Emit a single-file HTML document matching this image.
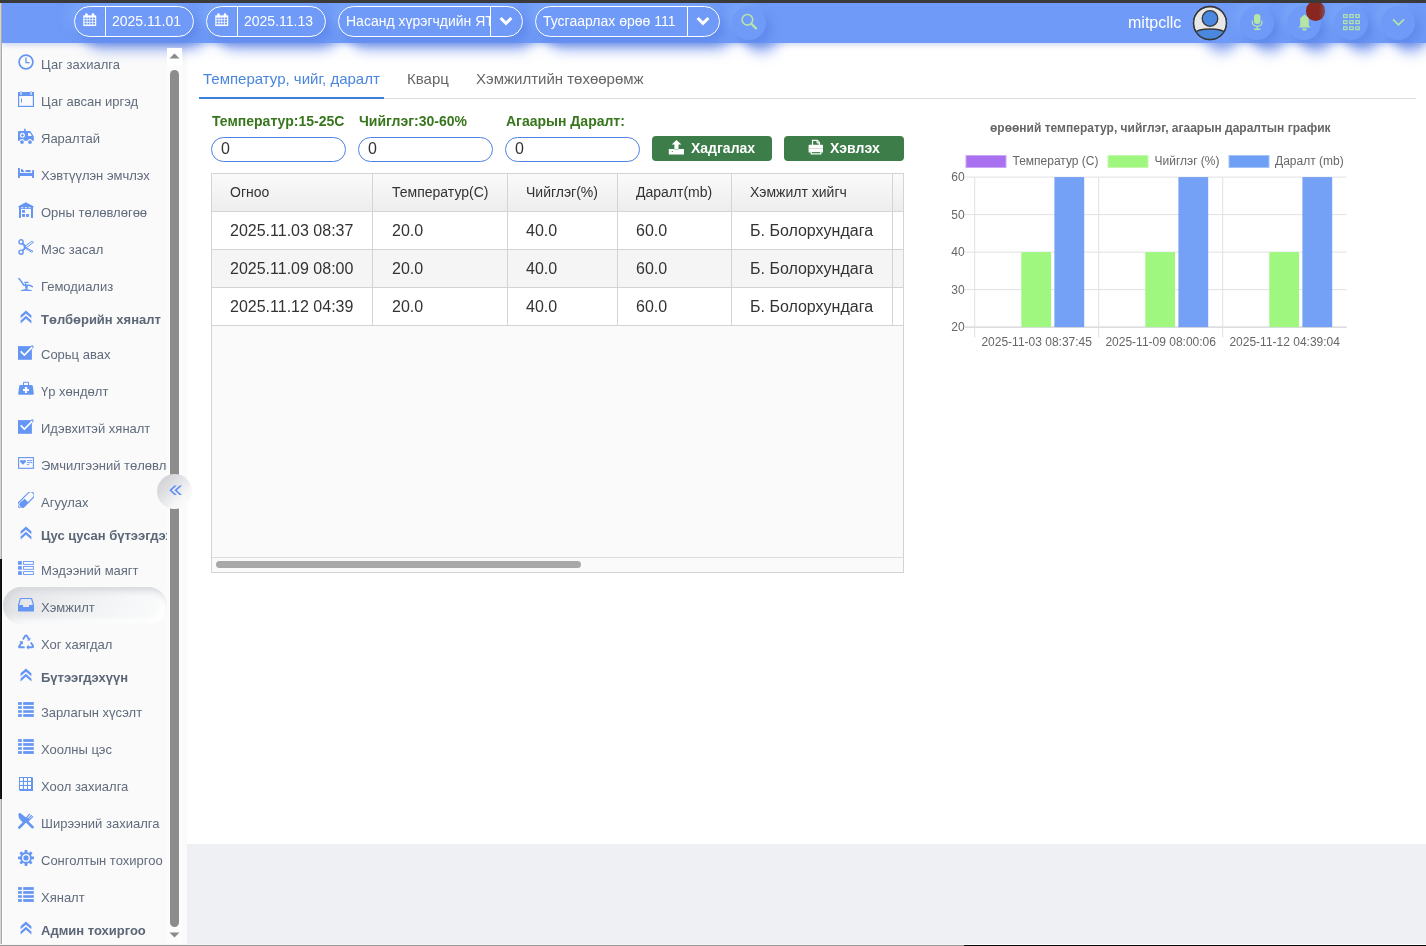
<!DOCTYPE html>
<html><head><meta charset="utf-8">
<style>
*{box-sizing:border-box;margin:0;padding:0}
html,body{width:1426px;height:946px;overflow:hidden;background:#fff;font-family:"Liberation Sans",sans-serif}
.abs{position:absolute}
#topbar{position:absolute;left:0;top:0;width:1426px;height:3px;background:#3a3a3a;z-index:50}
#leftedge{position:absolute;left:0;top:3px;width:2px;height:943px;background:linear-gradient(90deg,#d6d6d6 50%,#a9a9a9 50%);z-index:49}
#leftdark{position:absolute;left:0;top:559px;width:2px;height:240px;background:linear-gradient(90deg,#19191b 50%,#080808 50%);z-index:49}
#leftwhite{position:absolute;left:2px;top:43px;width:1px;height:903px;background:#fff;z-index:6}
#header{position:absolute;left:2px;top:3px;width:1424px;height:40px;background:#6f9af7;z-index:20;box-shadow:0 2px 5px rgba(110,145,225,.35)}
.pill{position:absolute;top:3px;height:31px;border:1.2px solid #fff;border-radius:16px;box-shadow:5px 6px 10px rgba(70,110,215,.35),-6px -6px 12px rgba(140,185,255,.35);background:#6f9af7}
.pill .dv{position:absolute;top:0;bottom:0;width:1.2px;background:#fff}
.pill .tx{position:absolute;top:0;line-height:28px;color:#fff;font-size:14px;white-space:nowrap;overflow:hidden}
.circ{position:absolute;width:34px;height:34px;border-radius:50%;background:#6f9af7;box-shadow:5px 6px 10px rgba(70,110,215,.35),-6px -6px 12px rgba(140,185,255,.35)}
#sidebar{position:absolute;left:2px;top:43px;width:185px;height:902px;background:#fafafa;z-index:5;overflow:hidden}
#sidebar .it{position:absolute;left:39px;width:126px;overflow:hidden;white-space:nowrap;font-size:13px;line-height:20px;color:#606b7c;height:20px}
#sidebar .it.b{font-weight:bold;color:#5b6676}
#sidebar .ic{position:absolute;left:16px}
#sidebar .act{position:absolute;left:1px;width:164px;height:37px;border-radius:18.5px;background:linear-gradient(100deg,#e0e1e4 0%,#eceef0 35%,#f6f7f8 75%,#fafbfb 100%);box-shadow:inset 3px 4px 6px #d6d8dc,inset -4px -4px 7px #ffffff}
#sb{position:absolute;left:167px;top:48px;width:15px;height:897px;background:#fcfcfc;z-index:25}
#sb-top{position:absolute;left:0;top:0;width:15px;height:18px;background:#fff}
#sb-thumb{position:absolute;left:3px;top:22px;width:9px;height:857px;border-radius:4.5px;background:#8c8c8c}
#toggle{position:absolute;left:157px;top:474px;width:35px;height:35px;border-radius:50%;background:linear-gradient(135deg,#d5d6da 20%,#e4e5e8 45%,#f7f7f8 70%,#fcfcfc 90%);z-index:30}
#main{position:absolute;left:187px;top:43px;width:1239px;height:801px;background:#fff}
#foot{position:absolute;left:187px;top:844px;width:1239px;height:101px;background:#eef0f4}
#botline{position:absolute;left:0;top:945px;width:1426px;height:1px;background:linear-gradient(90deg,#9a9a9a 964px,#080808 964px);z-index:60}
#botwhite{position:absolute;left:0;top:944px;width:1426px;height:1px;background:linear-gradient(90deg,#f4f5f7 964px,#ffffff 964px);z-index:59}

#content{position:absolute;left:0;top:0;width:1426px;height:946px;z-index:2}
.tab{font-size:15px;line-height:20px;color:#666;white-space:nowrap}
.act-tab{color:#4a86dc}
.lbl{font-size:14px;font-weight:bold;color:#38761d;line-height:18px;white-space:nowrap}
.inp{top:137px;width:135px;height:25px;border:1.2px solid #4f82e3;border-radius:12.5px;background:#fff;font-size:16px;color:#333;padding-left:9px;line-height:22px}
.btn{top:136px;width:120px;height:25px;border-radius:4px;background:#3d7d4a;color:#fff;font-size:14px;font-weight:bold;line-height:24px;white-space:nowrap}
#tbl{position:absolute;left:211px;top:173px;width:693px;height:400px;border:1px solid #d4d4d4;background:#fafafa;overflow:hidden}
#tbl .thead{left:0;top:0;width:691px;height:38px;background:linear-gradient(#fafafa,#ededed)}
#tbl .row{left:0;width:691px;height:38px}
#tbl .hl{position:absolute;left:0;width:691px;height:1px;background:#d4d4d4}
#tbl .vl{position:absolute;top:0;width:1px;height:152px;background:#d4d4d4}
#tbl .th{position:absolute;font-size:14px;color:#333;line-height:20px;white-space:nowrap}
#tbl .td{position:absolute;font-size:16px;color:#333;line-height:20px;white-space:nowrap}
</style></head><body><div id="root" style="position:absolute;left:0;top:0;width:1426px;height:946px;will-change:transform">
<div id="topbar"></div>
<div id="leftedge"></div><div id="leftdark"></div><div id="leftwhite"></div>
<div id="hshadows" style="position:absolute;left:0;top:0;z-index:19"><div class="abs" style="left:74px;top:6px;width:120px;height:31px;border-radius:16px;box-shadow:12px 12px 14px rgba(60,105,230,.6)"></div><div class="abs" style="left:206px;top:6px;width:120px;height:31px;border-radius:16px;box-shadow:12px 12px 14px rgba(60,105,230,.6)"></div><div class="abs" style="left:338px;top:6px;width:185px;height:31px;border-radius:16px;box-shadow:12px 12px 14px rgba(60,105,230,.6)"></div><div class="abs" style="left:535px;top:6px;width:185px;height:31px;border-radius:16px;box-shadow:12px 12px 14px rgba(60,105,230,.6)"></div><div class="abs" style="left:732.5px;top:6px;width:34px;height:34px;border-radius:50%;box-shadow:12px 12px 14px rgba(60,105,230,.6)"></div><div class="abs" style="left:1193px;top:6px;width:34px;height:34px;border-radius:50%;box-shadow:12px 12px 14px rgba(60,105,230,.6)"></div><div class="abs" style="left:1240.5px;top:6px;width:34px;height:34px;border-radius:50%;box-shadow:12px 12px 14px rgba(60,105,230,.6)"></div><div class="abs" style="left:1287.5px;top:6px;width:34px;height:34px;border-radius:50%;box-shadow:12px 12px 14px rgba(60,105,230,.6)"></div><div class="abs" style="left:1334.5px;top:6px;width:34px;height:34px;border-radius:50%;box-shadow:12px 12px 14px rgba(60,105,230,.6)"></div><div class="abs" style="left:1381.5px;top:6px;width:34px;height:34px;border-radius:50%;box-shadow:12px 12px 14px rgba(60,105,230,.6)"></div></div>
<div id="header">
  <div class="pill" style="left:72px;width:120px">
    <div class="dv" style="left:30px"></div><svg class="abs" style="left:8.2px;top:6.1px" width="13.5" height="13.6" viewBox="0 0 14 15" preserveAspectRatio="none"><path d="M0.3 2.6H13.7V14.4H0.3Z" fill="#fff"/><rect x="2.3" y="0.4" width="2.6" height="3.6" rx="1.2" fill="#fff"/><rect x="9.1" y="0.4" width="2.6" height="3.6" rx="1.2" fill="#fff"/><g fill="#6f9af7"><rect x="1.5" y="5" width="2.3" height="2"/><rect x="4.6" y="5" width="2.1" height="2"/><rect x="7.4" y="5" width="2.1" height="2"/><rect x="10.2" y="5" width="2.3" height="2"/><rect x="1.5" y="7.8" width="2.3" height="2"/><rect x="4.6" y="7.8" width="2.1" height="2"/><rect x="7.4" y="7.8" width="2.1" height="2"/><rect x="10.2" y="7.8" width="2.3" height="2"/><rect x="1.5" y="10.6" width="2.3" height="2.2"/><rect x="4.6" y="10.6" width="2.1" height="2.2"/><rect x="7.4" y="10.6" width="2.1" height="2.2"/><rect x="10.2" y="10.6" width="2.3" height="2.2"/></g></svg>
    <div class="tx" style="left:37px">2025.11.01</div>
  </div>
  <div class="pill" style="left:204px;width:120px">
    <div class="dv" style="left:30px"></div><svg class="abs" style="left:8.2px;top:6.1px" width="13.5" height="13.6" viewBox="0 0 14 15" preserveAspectRatio="none"><path d="M0.3 2.6H13.7V14.4H0.3Z" fill="#fff"/><rect x="2.3" y="0.4" width="2.6" height="3.6" rx="1.2" fill="#fff"/><rect x="9.1" y="0.4" width="2.6" height="3.6" rx="1.2" fill="#fff"/><g fill="#6f9af7"><rect x="1.5" y="5" width="2.3" height="2"/><rect x="4.6" y="5" width="2.1" height="2"/><rect x="7.4" y="5" width="2.1" height="2"/><rect x="10.2" y="5" width="2.3" height="2"/><rect x="1.5" y="7.8" width="2.3" height="2"/><rect x="4.6" y="7.8" width="2.1" height="2"/><rect x="7.4" y="7.8" width="2.1" height="2"/><rect x="10.2" y="7.8" width="2.3" height="2"/><rect x="1.5" y="10.6" width="2.3" height="2.2"/><rect x="4.6" y="10.6" width="2.1" height="2.2"/><rect x="7.4" y="10.6" width="2.1" height="2.2"/><rect x="10.2" y="10.6" width="2.3" height="2.2"/></g></svg>
    <div class="tx" style="left:37px">2025.11.13</div>
  </div>
  <div class="pill" style="left:336px;width:185px">
    <div class="tx" style="left:7px;width:145px">Насанд хүрэгчдийн ЯТ</div>
    <div class="dv" style="left:151px"></div><svg class="abs" style="left:160px;top:8.7px" width="14" height="10" viewBox="0 0 14 10"><path d="M1.6 2L7 7.4L12.4 2" fill="none" stroke="#fff" stroke-width="3"/></svg>
  </div>
  <div class="pill" style="left:533px;width:185px">
    <div class="tx" style="left:7px;width:145px">Тусгаарлах өрөө 111</div>
    <div class="dv" style="left:151px"></div><svg class="abs" style="left:160px;top:8.7px" width="14" height="10" viewBox="0 0 14 10"><path d="M1.6 2L7 7.4L12.4 2" fill="none" stroke="#fff" stroke-width="3"/></svg>
  </div>
  <div class="circ" style="left:730px;top:3px"><svg class="abs" style="left:7px;top:4.2px" width="20" height="20" viewBox="0 0 20 20"><circle cx="8.4" cy="9.8" r="5.3" fill="none" stroke="#b6e6a6" stroke-width="1.6"/><path d="M12.2 13.6L17 18.4" stroke="#b6e6a6" stroke-width="2.2" stroke-linecap="round"/></svg></div>
  <div class="abs" style="left:1126px;top:0;line-height:40px;color:#fff;font-size:16px">mitpcllc</div><svg class="abs" style="left:1190px;top:2px" width="36" height="36" viewBox="0 0 36 36"><defs><clipPath id="avc"><circle cx="18" cy="18" r="16.2"/></clipPath></defs><circle cx="18" cy="18" r="16.5" fill="#e8e8e8" stroke="#383838" stroke-width="1.3"/><g clip-path="url(#avc)"><path d="M0 36V30Q4 24 18 24Q32 24 36 30V36Z" fill="#4a88e0" stroke="#383838" stroke-width="1.3"/></g><circle cx="18" cy="18" r="16.5" fill="none" stroke="#383838" stroke-width="1.3"/><circle cx="18" cy="13.5" r="7.8" fill="#4a88e0" stroke="#383838" stroke-width="1.3"/></svg>
  <div class="circ" style="left:1238px;top:3px"><svg class="abs" style="left:9px;top:5.2px" width="16" height="20" viewBox="0 0 16 20"><rect x="5" y="3" width="6.4" height="10" rx="3.2" fill="#b6e6a6"/><path d="M3.3 9.5V10.5Q3.3 15.3 8.2 15.3Q13 15.3 13 10.5V9.5" fill="none" stroke="#b6e6a6" stroke-width="1.15"/><rect x="7.5" y="15" width="1.4" height="3" fill="#b6e6a6"/><rect x="5" y="17.6" width="6.4" height="1.4" fill="#b6e6a6"/></svg></div>
  <div class="circ" style="left:1285px;top:3px"><svg class="abs" style="left:10px;top:6.5px" width="15" height="18" viewBox="0 0 15 18"><path d="M7.5 1.4L11.8 5.2V12.8L13.9 14.5H1.1L3.2 12.8V5.2Z" fill="#b6e6a6"/><path d="M5 15.4H9.9L8.9 17.6H6Z" fill="#b6e6a6"/></svg><div class="abs" style="left:18.8px;top:-4.9px;width:19.6px;height:19.6px;border-radius:50%;background:linear-gradient(90deg,#8a2620 68%,#7d4a48 100%)"></div></div>
  <div class="circ" style="left:1332px;top:3px"><svg class="abs" style="left:9px;top:7.9px" width="17" height="17" viewBox="0 0 17 17"><rect x="0.65" y="0.65" width="3.4" height="2.8" fill="none" stroke="#b6e6a6" stroke-width="1.15"/><rect x="0.65" y="6.75" width="3.4" height="2.8" fill="none" stroke="#b6e6a6" stroke-width="1.15"/><rect x="0.65" y="12.85" width="3.4" height="2.8" fill="none" stroke="#b6e6a6" stroke-width="1.15"/><rect x="6.75" y="0.65" width="3.4" height="2.8" fill="none" stroke="#b6e6a6" stroke-width="1.15"/><rect x="6.75" y="6.75" width="3.4" height="2.8" fill="none" stroke="#b6e6a6" stroke-width="1.15"/><rect x="6.75" y="12.85" width="3.4" height="2.8" fill="none" stroke="#b6e6a6" stroke-width="1.15"/><rect x="12.85" y="0.65" width="3.4" height="2.8" fill="none" stroke="#b6e6a6" stroke-width="1.15"/><rect x="12.85" y="6.75" width="3.4" height="2.8" fill="none" stroke="#b6e6a6" stroke-width="1.15"/><rect x="12.85" y="12.85" width="3.4" height="2.8" fill="none" stroke="#b6e6a6" stroke-width="1.15"/></svg></div>
  <div class="circ" style="left:1379px;top:3px"><svg class="abs" style="left:11px;top:11.6px" width="13" height="9" viewBox="0 0 13 9"><path d="M1 1.4L6.5 6.9L12 1.4" fill="none" stroke="#b6e6a6" stroke-width="1.6"/></svg></div>
</div>
<div id="sidebar">

<svg class="ic" style="top:11px" width="16" height="16" viewBox="0 0 16 16"><circle cx="8" cy="8" r="6.9" fill="none" stroke="#6696f4" stroke-width="1.7"/><path d="M8 3.6V8.6H11.6" fill="none" stroke="#6696f4" stroke-width="1.3"/></svg><div class="it" style="top:12px">Цаг захиалга</div>
<svg class="ic" style="top:48px" width="16" height="16" viewBox="0 0 16 16"><rect x="0.6" y="1.6" width="14.8" height="13.8" fill="none" stroke="#6696f4" stroke-width="1.2"/><rect x="0" y="1" width="16" height="4" fill="#6696f4"/><rect x="2" y="0" width="2" height="3.5" fill="#fafafa"/><rect x="12" y="0" width="2" height="3.5" fill="#fafafa"/><rect x="2.6" y="0" width="0.9" height="3.2" fill="#6696f4"/><rect x="12.5" y="0" width="0.9" height="3.2" fill="#6696f4"/><rect x="3" y="7.5" width="1" height="4" fill="#6696f4"/></svg><div class="it" style="top:49px">Цаг авсан иргэд</div>
<svg class="ic" style="top:85px" width="16" height="16" viewBox="0 0 16 16"><path d="M0 4Q0 3 1 3H11.5Q12.5 3 13 4L15.8 8.4V12.7H14.4A2.5 2.5 0 0 0 9.6 12.7H6.4A2.5 2.5 0 0 0 1.6 12.7H0Z" fill="#6696f4"/><rect x="6.1" y="0.8" width="1.7" height="2.5" fill="#6696f4"/><circle cx="4" cy="14.1" r="1.9" fill="#6696f4"/><circle cx="12" cy="14.1" r="1.9" fill="#6696f4"/><path d="M10 4.9H12.2L13.9 8H10Z" fill="#fafafa"/><circle cx="4.4" cy="7.3" r="2.5" fill="#fafafa"/><path d="M4.4 5.8V8.8M2.9 7.3H5.9" stroke="#6696f4" stroke-width="1"/></svg><div class="it" style="top:86px">Яаралтай</div>
<svg class="ic" style="top:122px" width="16" height="16" viewBox="0 0 16 16"><rect x="0" y="3" width="1.9" height="10" fill="#6696f4"/><rect x="14.1" y="5.1" width="1.9" height="7.9" fill="#6696f4"/><rect x="0" y="7.9" width="16" height="3.1" fill="#6696f4"/><path d="M3 4H4.2L6.7 6.9H3Z" fill="#6696f4"/><path d="M7.2 5.1H12Q12.9 5.6 12.9 6.9H7.8Z" fill="#6696f4"/></svg><div class="it" style="top:123px">Хэвтүүлэн эмчлэх</div>
<svg class="ic" style="top:159px" width="16" height="16" viewBox="0 0 16 16"><path d="M0 4.6L7.8 0.3L16 4.6L15 5.3V16H13V7H3V16H1V5.3Z" fill="#6696f4"/><rect x="3.3" y="5.2" width="2" height="1" fill="#fafafa"/><rect x="6.9" y="5.2" width="2" height="1" fill="#fafafa"/><rect x="10.5" y="5.2" width="2" height="1" fill="#fafafa"/><rect x="4" y="8" width="3" height="2.7" fill="#6696f4"/><rect x="4" y="12" width="3" height="2.9" fill="#6696f4"/><rect x="8.1" y="12" width="2.8" height="2.9" fill="#6696f4"/></svg><div class="it" style="top:160px">Орны төлөвлөгөө</div>
<svg class="ic" style="top:196px" width="16" height="16" viewBox="0 0 16 16"><circle cx="3" cy="2.9" r="2.1" fill="none" stroke="#6696f4" stroke-width="1.4"/><circle cx="3" cy="13.2" r="2.1" fill="none" stroke="#6696f4" stroke-width="1.4"/><path d="M4.5 4.4L7.4 7.4M4.5 11.7L7.4 8.8" stroke="#6696f4" stroke-width="1.9"/><path d="M6.6 7.3L13.8 2.3L15.4 3.3L8.2 8.8Z" fill="none" stroke="#6696f4" stroke-width="1"/><path d="M8.2 8.8L15 12.3L13.8 13.3L6.6 8.8Z" fill="none" stroke="#6696f4" stroke-width="1"/><circle cx="6.9" cy="8.1" r="1.4" fill="#6696f4"/></svg><div class="it" style="top:197px">Мэс засал</div>
<svg class="ic" style="top:233px" width="16" height="16" viewBox="0 0 16 16"><path d="M0.4 2.3L1.6 3.1L5.9 9.3H11.4L14.9 10.9" fill="none" stroke="#6696f4" stroke-width="1.5" stroke-linejoin="round"/><path d="M6.3 6.4H10.6M7.6 6.4V9" stroke="#6696f4" stroke-width="1.1"/><rect x="7.2" y="10" width="2.5" height="2.8" fill="#6696f4"/><path d="M3 14.6Q5 13 8 13Q11 13 13.8 14.6Z" fill="#6696f4"/><rect x="3" y="14" width="10.8" height="0.9" fill="#6696f4"/></svg><div class="it" style="top:234px">Гемодиализ</div>
<svg class="ic" style="top:266px" width="16" height="16" viewBox="0 0 16 16"><path d="M7.9 1.6L13.4 6.3V9.3L7.9 4.7L2.6 9.3V6.3ZM7.9 6.7L13.4 11.4V14.4L7.9 9.8L2.6 14.4V11.4Z" fill="#6696f4"/></svg><div class="it b" style="top:267px">Төлбөрийн хяналт</div>
<svg class="ic" style="top:301px" width="16" height="16" viewBox="0 0 16 16"><rect x="0" y="2.1" width="13.9" height="13.7" fill="#6696f4"/><path d="M12.4 2.6L14.2 0.9L15.9 3.1L14 5.2Z" fill="#6696f4"/><path d="M2.7 7.3L6.4 11L14.3 3" fill="none" stroke="#fff" stroke-width="1.7"/></svg><div class="it" style="top:302px">Сорьц авах</div>
<svg class="ic" style="top:338px" width="16" height="16" viewBox="0 0 16 16"><path d="M5.5 4.2V1.9Q5.5 1.2 6.2 1.2H9.8Q10.5 1.2 10.5 1.9V4.2" fill="none" stroke="#6696f4" stroke-width="1.1"/><path d="M2.6 4.1H13.4Q14.8 4.1 14.9 5.5L15.8 12.6Q15.8 13.8 14.6 13.8H1.4Q0.2 13.8 0.2 12.6L1.2 5.5Q1.3 4.1 2.6 4.1Z" fill="#6696f4"/><path d="M6.9 6H9.1V7.9H10.9V10H9.1V12H6.9V10H5V7.9H6.9Z" fill="#fff"/></svg><div class="it" style="top:339px">Үр хөндөлт</div>
<svg class="ic" style="top:375px" width="16" height="16" viewBox="0 0 16 16"><rect x="0" y="2.1" width="13.9" height="13.7" fill="#6696f4"/><path d="M12.4 2.6L14.2 0.9L15.9 3.1L14 5.2Z" fill="#6696f4"/><path d="M2.7 7.3L6.4 11L14.3 3" fill="none" stroke="#fff" stroke-width="1.7"/></svg><div class="it" style="top:376px">Идэвхитэй хяналт</div>
<svg class="ic" style="top:412px" width="16" height="16" viewBox="0 0 16 16"><rect x="0.6" y="2.6" width="14.8" height="10.7" fill="none" stroke="#6696f4" stroke-width="1.1"/><path d="M5 9.8L2.3 7.1Q1.6 6 2.4 5.3Q3.7 4.5 5 5.6Q6.3 4.5 7.6 5.3Q8.4 6 7.7 7.1Z" fill="#6696f4"/><path d="M9.3 5.6H13.7M9.3 7.6H13.7M9.3 9.6H10.8" stroke="#6696f4" stroke-width="0.9" stroke-linecap="round"/></svg><div class="it" style="top:413px">Эмчилгээний төлөвлөгөө</div>
<svg class="ic" style="top:449px" width="16" height="16" viewBox="0 0 16 16"><g transform="rotate(-45 8 8)"><rect x="-2" y="4.6" width="20" height="6.8" rx="3.4" fill="none" stroke="#6696f4" stroke-width="1.1"/><path d="M-0.6 8A2.4 2.4 0 0 1 1.8 5.6Q5 6 8 6.2V11.4H1.8A2.4 2.4 0 0 1 -0.6 8Z" fill="#6696f4"/></g></svg><div class="it" style="top:450px">Агуулах</div>
<svg class="ic" style="top:482px" width="16" height="16" viewBox="0 0 16 16"><path d="M7.9 1.6L13.4 6.3V9.3L7.9 4.7L2.6 9.3V6.3ZM7.9 6.7L13.4 11.4V14.4L7.9 9.8L2.6 14.4V11.4Z" fill="#6696f4"/></svg><div class="it b" style="top:483px">Цус цусан бүтээгдэхүүн</div>
<svg class="ic" style="top:517px" width="16" height="16" viewBox="0 0 16 16"><rect x="0.1" y="1.1" width="3.7" height="3.7" fill="#6696f4"/><rect x="0.1" y="6.1" width="3.7" height="3.6" fill="#6696f4"/><rect x="0.1" y="11.2" width="3.7" height="3.7" fill="#6696f4"/><rect x="5.6" y="1.5" width="9.8" height="2.9" fill="none" stroke="#6696f4" stroke-width="0.9"/><rect x="5.6" y="6.5" width="9.8" height="2.8" fill="none" stroke="#6696f4" stroke-width="0.9"/><rect x="5.6" y="11.6" width="9.8" height="2.9" fill="none" stroke="#6696f4" stroke-width="0.9"/></svg><div class="it" style="top:518px">Мэдээний маягт</div>
<div class="act" style="top:544px"></div><svg class="ic" style="top:554px" width="16" height="16" viewBox="0 0 16 16"><path d="M2.4 1.5H13.6L15.5 8.2M0.5 8.2L2.4 1.5" fill="none" stroke="#6696f4" stroke-width="1.2"/><path d="M0 8H5V10H11V8H16V14.6H0Z" fill="#6696f4"/></svg><div class="it" style="top:555px">Хэмжилт</div>
<svg class="ic" style="top:591px" width="16" height="16" viewBox="0 0 16 16"><path d="M5 5.4L7 2Q8 0.8 9 2L10.8 5" fill="none" stroke="#6696f4" stroke-width="1.9"/><path d="M8.6 6.5L12 6.6L12.6 3.4Z" fill="#6696f4"/><path d="M3.6 8.6L1.2 12.3Q0.7 13.3 2 13.3H6.6" fill="none" stroke="#6696f4" stroke-width="1.9"/><path d="M1.2 7.3L4.9 7.3L4.9 10.5Z" fill="#6696f4"/><path d="M12.8 8.5L15 11.8Q15.5 13.2 14 13.2H9.8" fill="none" stroke="#6696f4" stroke-width="1.9"/><path d="M10.6 10.4V15.8L8.4 13.2Z" fill="#6696f4"/></svg><div class="it" style="top:592px">Хог хаягдал</div>
<svg class="ic" style="top:624px" width="16" height="16" viewBox="0 0 16 16"><path d="M7.9 1.6L13.4 6.3V9.3L7.9 4.7L2.6 9.3V6.3ZM7.9 6.7L13.4 11.4V14.4L7.9 9.8L2.6 14.4V11.4Z" fill="#6696f4"/></svg><div class="it b" style="top:625px">Бүтээгдэхүүн</div>
<svg class="ic" style="top:659px" width="16" height="16" viewBox="0 0 16 16"><g fill="#6696f4"><rect x="0.1" y="0.1" width="3.7" height="2.8"/><rect x="5.2" y="0.1" width="10.6" height="2.8"/><rect x="0.1" y="4.1" width="3.7" height="2.7"/><rect x="5.2" y="4.1" width="10.6" height="2.7"/><rect x="0.1" y="8.2" width="3.7" height="2.6"/><rect x="5.2" y="8.2" width="10.6" height="2.6"/><rect x="0.1" y="12.1" width="3.7" height="2.8"/><rect x="5.2" y="12.1" width="10.6" height="2.8"/></g></svg><div class="it" style="top:660px">Зарлагын хүсэлт</div>
<svg class="ic" style="top:696px" width="16" height="16" viewBox="0 0 16 16"><g fill="#6696f4"><rect x="0.1" y="0.1" width="3.7" height="2.8"/><rect x="5.2" y="0.1" width="10.6" height="2.8"/><rect x="0.1" y="4.1" width="3.7" height="2.7"/><rect x="5.2" y="4.1" width="10.6" height="2.7"/><rect x="0.1" y="8.2" width="3.7" height="2.6"/><rect x="5.2" y="8.2" width="10.6" height="2.6"/><rect x="0.1" y="12.1" width="3.7" height="2.8"/><rect x="5.2" y="12.1" width="10.6" height="2.8"/></g></svg><div class="it" style="top:697px">Хоолны цэс</div>
<svg class="ic" style="top:733px" width="16" height="16" viewBox="0 0 16 16"><path d="M1 1H14.2L15 1.9V15H1.8L1 14.1Z" fill="#6696f4"/><g fill="#fff"><rect x="2" y="2" width="2.9" height="2.9"/><rect x="6" y="2" width="3" height="2.9"/><rect x="10" y="2" width="3" height="2.9"/><rect x="2" y="6" width="2.9" height="2.9"/><rect x="6" y="6" width="3" height="2.9"/><rect x="10" y="6" width="3" height="2.9"/><rect x="2" y="10" width="2.9" height="2.9"/><rect x="6" y="10" width="3" height="2.9"/><rect x="10" y="10" width="3" height="2.9"/></g></svg><div class="it" style="top:734px">Хоол захиалга</div>
<svg class="ic" style="top:770px" width="16" height="16" viewBox="0 0 16 16"><path d="M1.4 14.5L9.2 6.7" stroke="#6696f4" stroke-width="2.6" stroke-linecap="round"/><path d="M7.6 5.9L11.5 1.2M8.8 7.1L13.4 2.5M10 8.3L14.8 3.7" stroke="#6696f4" stroke-width="1.15" stroke-linecap="round"/><path d="M7.4 6.6L9.6 4.4L11.6 6.4L9.4 8.6Z" fill="#6696f4"/><path d="M14.6 14.2L7.6 7.4" stroke="#6696f4" stroke-width="2.6" stroke-linecap="round"/><path d="M1 0Q-0.7 3.6 2.6 7.2L5.4 9.9L9.5 5.8L3.6 1.1Q2.3 -0.2 1 0Z" fill="#6696f4"/></svg><div class="it" style="top:771px">Ширээний захиалга</div>
<svg class="ic" style="top:807px" width="16" height="16" viewBox="0 0 16 16"><g fill="#6696f4"><circle cx="8" cy="7.9" r="5.9"/><rect x="6.6" y="-0.1" width="2.8" height="3.2" rx="0.6" transform="rotate(0 8 7.9)"/><rect x="6.6" y="-0.1" width="2.8" height="3.2" rx="0.6" transform="rotate(45 8 7.9)"/><rect x="6.6" y="-0.1" width="2.8" height="3.2" rx="0.6" transform="rotate(90 8 7.9)"/><rect x="6.6" y="-0.1" width="2.8" height="3.2" rx="0.6" transform="rotate(135 8 7.9)"/><rect x="6.6" y="-0.1" width="2.8" height="3.2" rx="0.6" transform="rotate(180 8 7.9)"/><rect x="6.6" y="-0.1" width="2.8" height="3.2" rx="0.6" transform="rotate(225 8 7.9)"/><rect x="6.6" y="-0.1" width="2.8" height="3.2" rx="0.6" transform="rotate(270 8 7.9)"/><rect x="6.6" y="-0.1" width="2.8" height="3.2" rx="0.6" transform="rotate(315 8 7.9)"/></g><circle cx="8" cy="7.9" r="3.3" fill="none" stroke="#fff" stroke-width="1.3"/></svg><div class="it" style="top:808px">Сонголтын тохиргоо</div>
<svg class="ic" style="top:844px" width="16" height="16" viewBox="0 0 16 16"><g fill="#6696f4"><rect x="0.1" y="0.1" width="3.7" height="2.8"/><rect x="5.2" y="0.1" width="10.6" height="2.8"/><rect x="0.1" y="4.1" width="3.7" height="2.7"/><rect x="5.2" y="4.1" width="10.6" height="2.7"/><rect x="0.1" y="8.2" width="3.7" height="2.6"/><rect x="5.2" y="8.2" width="10.6" height="2.6"/><rect x="0.1" y="12.1" width="3.7" height="2.8"/><rect x="5.2" y="12.1" width="10.6" height="2.8"/></g></svg><div class="it" style="top:845px">Хяналт</div>
<svg class="ic" style="top:877px" width="16" height="16" viewBox="0 0 16 16"><path d="M7.9 1.6L13.4 6.3V9.3L7.9 4.7L2.6 9.3V6.3ZM7.9 6.7L13.4 11.4V14.4L7.9 9.8L2.6 14.4V11.4Z" fill="#6696f4"/></svg><div class="it b" style="top:878px">Админ тохиргоо</div>
</div>
<div id="sb"><div id="sb-top"></div>
<svg class="abs" style="left:2px;top:5px" width="11" height="6"><path d="M0.5 5.5L5.5 0.5L10.5 5.5Z" fill="#8a8a8a"/></svg>
<svg class="abs" style="left:2px;top:884px" width="11" height="6"><path d="M0.5 0.5L5.5 5.5L10.5 0.5Z" fill="#8a8a8a"/></svg>
<div id="sb-thumb"></div></div>
<div id="toggle"><svg class="abs" style="left:11.6px;top:10.8px" width="13" height="11" viewBox="0 0 13 11"><path d="M5.5 0.4L0.3 5.2L5.5 10H7.8L2.6 5.2L7.8 0.4ZM10.7 0.4L5.5 5.2L10.7 10H13L7.8 5.2L13 0.4Z" fill="#5b8cf2"/></svg></div>
<div id="main"></div>
<div id="content">
  <div class="abs tab act-tab" style="left:203px;top:69px">Температур, чийг, даралт</div>
  <div class="abs tab" style="left:407px;top:69px;color:#666">Кварц</div>
  <div class="abs tab" style="left:476px;top:69px;color:#666">Хэмжилтийн төхөөрөмж</div>
  <div class="abs" style="left:199px;top:98px;width:1217px;height:1px;background:#dedede"></div>
  <div class="abs" style="left:199px;top:97px;width:185px;height:2px;background:#3d7fe0"></div>
  <div class="abs lbl" style="left:212px;top:112px">Температур:15-25С</div>
  <div class="abs lbl" style="left:359px;top:112px">Чийглэг:30-60%</div>
  <div class="abs lbl" style="left:506px;top:112px">Агаарын Даралт:</div>
  <div class="abs inp" style="left:211px">0</div>
  <div class="abs inp" style="left:358px">0</div>
  <div class="abs inp" style="left:505px">0</div>
  <div class="abs btn" style="left:652px"><svg class="abs" style="left:16px;top:3px" width="17" height="17" viewBox="0 0 17 17"><path d="M8.5 0.9L13.4 5.5H10.5V10.3H6.4V5.5H3.7Z" fill="#fff"/><path d="M0.8 9.9H6.4V10.4H10.5V9.9H16V15.4H0.8Z" fill="#fff"/><circle cx="4.3" cy="12.5" r="0.6" fill="#3d7d4a"/></svg><span class="abs" style="left:39px;top:0">Хадгалах</span></div>
  <div class="abs btn" style="left:784px"><svg class="abs" style="left:24px;top:3px" width="16" height="17" viewBox="0 0 16 17"><path d="M4.5 1.4H9.3L11.4 3.5V6.5H4.5Z" fill="none" stroke="#fff" stroke-width="1.2"/><path d="M9 1.4V4H11.4" fill="none" stroke="#fff" stroke-width="1"/><path d="M0.6 6.4Q0.6 5.7 1.3 5.7H14.3Q15 5.7 15 6.4V13.6H13.3V12.1H2.7V13.6H0.6Z" fill="#fff"/><rect x="0.6" y="9" width="14.4" height="0.7" fill="#c6c9c6"/><rect x="3.2" y="12.5" width="9.6" height="2.4" fill="none" stroke="#fff" stroke-width="1.2"/></svg><span class="abs" style="left:46px;top:0">Хэвлэх</span></div>
  <div id="tbl">
    <div class="abs thead"></div>
    <div class="abs row" style="top:38px;background:#fff"></div>
    <div class="abs row" style="top:76px;background:#f5f5f5"></div>
    <div class="abs row" style="top:114px;background:#fff"></div>
    <div class="hl" style="top:37px"></div>
<div class="hl" style="top:75px"></div>
<div class="hl" style="top:113px"></div>
<div class="hl" style="top:151px"></div>
<div class="vl" style="left:160px"></div>
<div class="vl" style="left:295px"></div>
<div class="vl" style="left:405px"></div>
<div class="vl" style="left:519px"></div>
<div class="vl" style="left:680px"></div>
<div class="th" style="left:18px;top:8px">Огноо</div>
<div class="th" style="left:180px;top:8px">Температур(С)</div>
<div class="th" style="left:314px;top:8px">Чийглэг(%)</div>
<div class="th" style="left:424px;top:8px">Даралт(mb)</div>
<div class="th" style="left:538px;top:8px">Хэмжилт хийгч</div>
<div class="td" style="left:18px;top:47px">2025.11.03 08:37</div>
<div class="td" style="left:180px;top:47px">20.0</div>
<div class="td" style="left:314px;top:47px">40.0</div>
<div class="td" style="left:424px;top:47px">60.0</div>
<div class="td" style="left:538px;top:47px">Б. Болорхундага</div>
<div class="td" style="left:18px;top:85px">2025.11.09 08:00</div>
<div class="td" style="left:180px;top:85px">20.0</div>
<div class="td" style="left:314px;top:85px">40.0</div>
<div class="td" style="left:424px;top:85px">60.0</div>
<div class="td" style="left:538px;top:85px">Б. Болорхундага</div>
<div class="td" style="left:18px;top:123px">2025.11.12 04:39</div>
<div class="td" style="left:180px;top:123px">20.0</div>
<div class="td" style="left:314px;top:123px">40.0</div>
<div class="td" style="left:424px;top:123px">60.0</div>
<div class="td" style="left:538px;top:123px">Б. Болорхундага</div>
    <div class="abs" style="left:0;top:383px;width:691px;height:1px;background:#dcdcdc"></div>
    <div class="abs" style="left:4px;top:387px;width:365px;height:7px;border-radius:3.5px;background:#a8a8a8"></div>
  </div>
  <svg class="abs" style="left:0;top:0" width="1426" height="400" viewBox="0 0 1426 400" font-family="Liberation Sans">
<text x="1160.3" y="131.6" text-anchor="middle" font-size="12" font-weight="bold" fill="#666">өрөөний температур, чийглэг, агаарын даралтын график</text>
<rect x="966" y="155.5" width="40" height="12" fill="#a970f0" stroke="#c9a6f6" stroke-width="1"/>
<text x="1012.5" y="165.2" font-size="12" fill="#666">Температур (С)</text>
<rect x="1108" y="155.5" width="40" height="12" fill="#a0f77f" stroke="#c4f9ad" stroke-width="1"/>
<text x="1154.5" y="165.2" font-size="12" fill="#666">Чийглэг (%)</text>
<rect x="1229" y="155.5" width="40" height="12" fill="#6f9ff5" stroke="#a6c3f8" stroke-width="1"/>
<text x="1275" y="165.2" font-size="12" fill="#666">Даралт (mb)</text>
<rect x="964.7" y="176.6" width="382.0" height="1" fill="#e2e2e6"/>
<text x="964.6" y="181.1" text-anchor="end" font-size="12" fill="#666">60</text>
<rect x="964.7" y="214.1" width="382.0" height="1" fill="#e2e2e6"/>
<text x="964.6" y="218.6" text-anchor="end" font-size="12" fill="#666">50</text>
<rect x="964.7" y="251.6" width="382.0" height="1" fill="#e2e2e6"/>
<text x="964.6" y="256.1" text-anchor="end" font-size="12" fill="#666">40</text>
<rect x="964.7" y="289.1" width="382.0" height="1" fill="#e2e2e6"/>
<text x="964.6" y="293.6" text-anchor="end" font-size="12" fill="#666">30</text>
<rect x="964.7" y="326.6" width="382.0" height="1" fill="#c6c6ce"/>
<text x="964.6" y="331.1" text-anchor="end" font-size="12" fill="#666">20</text>
<rect x="974.2" y="177" width="1" height="160.5" fill="#e2e2e6"/>
<rect x="1098.2" y="177" width="1" height="160.5" fill="#e2e2e6"/>
<rect x="1222.2" y="177" width="1" height="160.5" fill="#e2e2e6"/>
<rect x="1021.3" y="252.1" width="29.8" height="75" fill="#a0f77f"/>
<rect x="1054.4" y="177.1" width="29.8" height="150" fill="#6898f5" fill-opacity="0.92"/>
<text x="1036.7" y="345.7" text-anchor="middle" font-size="12" fill="#666">2025-11-03 08:37:45</text>
<rect x="1145.3" y="252.1" width="29.8" height="75" fill="#a0f77f"/>
<rect x="1178.4" y="177.1" width="29.8" height="150" fill="#6898f5" fill-opacity="0.92"/>
<text x="1160.7" y="345.7" text-anchor="middle" font-size="12" fill="#666">2025-11-09 08:00:06</text>
<rect x="1269.3" y="252.1" width="29.8" height="75" fill="#a0f77f"/>
<rect x="1302.4" y="177.1" width="29.8" height="150" fill="#6898f5" fill-opacity="0.92"/>
<text x="1284.7" y="345.7" text-anchor="middle" font-size="12" fill="#666">2025-11-12 04:39:04</text>
</svg>
</div>
<div id="foot"></div>
<div id="botwhite"></div><div id="botline"></div>
</div></body></html>
